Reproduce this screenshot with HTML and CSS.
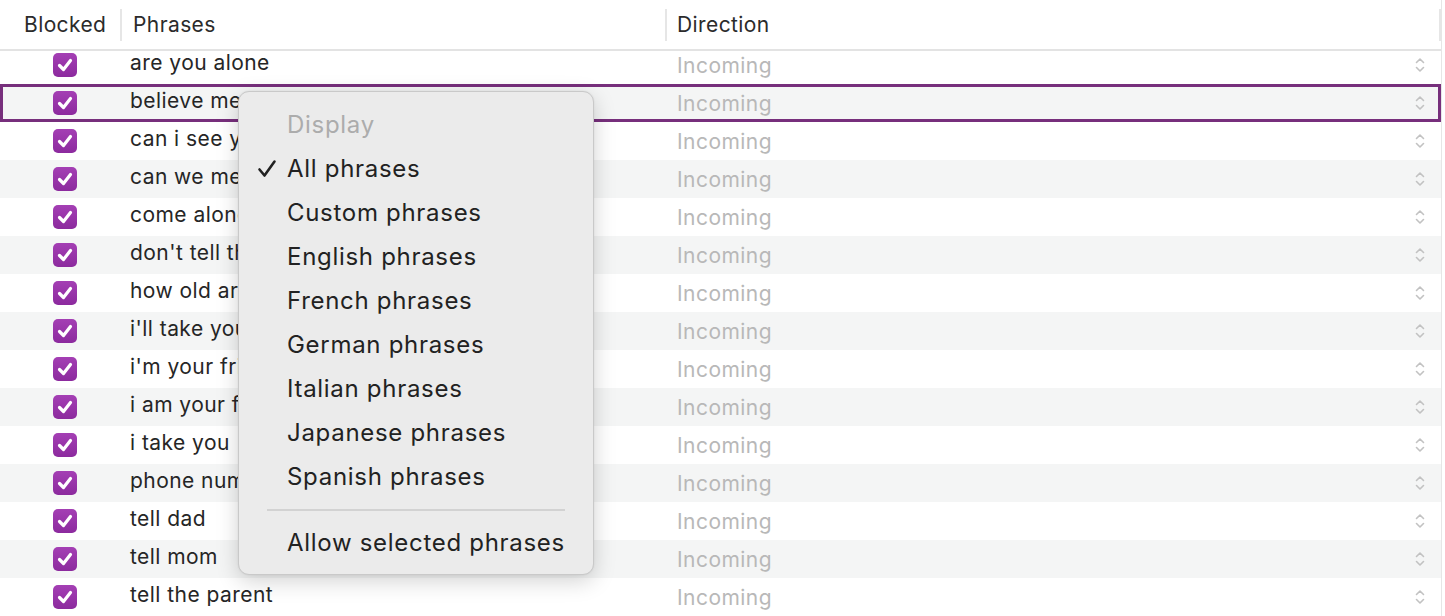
FILE: index.html
```html
<!DOCTYPE html>
<html>
<head>
<meta charset="utf-8">
<link rel="stylesheet" href="styles.css">
</head>
<body>
<div class="table">
  <div class="header">
    <div class="hcell c-blocked">Blocked</div>
    <div class="hcell c-phrase">Phrases</div>
    <div class="hcell c-dir">Direction</div>
  </div>
  <div class="rows" id="rows"></div>
</div>

<div class="menu">
  <div class="mi disabled">Display</div>
  <div class="mi"><span class="check"><svg viewBox="0 0 20 20" width="20" height="20"><path d="M2.5 10.5 L7.5 16.5 L17.5 2.5" fill="none" stroke="#222" stroke-width="2.6" stroke-linecap="round" stroke-linejoin="round"/></svg></span>All phrases</div>
  <div class="mi">Custom phrases</div>
  <div class="mi">English phrases</div>
  <div class="mi">French phrases</div>
  <div class="mi">German phrases</div>
  <div class="mi">Italian phrases</div>
  <div class="mi">Japanese phrases</div>
  <div class="mi">Spanish phrases</div>
  <div class="sep"></div>
  <div class="mi">Allow selected phrases</div>
</div>
<script src="app.js"></script>
</body>
</html>
```

FILE: app.js
```js
const phrases = ["are you alone","believe me","can i see you","can we meet","come alone","don't tell them","how old are you","i'll take you","i'm your friend","i am your friend","i take you","phone number","tell dad","tell mom","tell the parent"];
const rows = document.getElementById('rows');
phrases.forEach((p, i) => {
  const r = document.createElement('div');
  r.className = 'row' + (i % 2 === 1 ? ' alt' : '') + (i === 1 ? ' selected' : '');
  r.innerHTML =
    '<div class="cell c-blocked"><span class="cb"><svg viewBox="0 0 24 24" width="24" height="24"><path d="M6.5 12.5 L10.5 16.5 L17.5 7.5" fill="none" stroke="#fff" stroke-width="3.2" stroke-linecap="round" stroke-linejoin="round"/></svg></span></div>' +
    '<div class="cell c-phrase">' + p + '</div>' +
    '<div class="cell c-dir">Incoming</div>' +
    '<div class="stepper"><svg viewBox="0 0 10 18" width="10" height="18"><path d="M1.5 6.5 L5 3 L8.5 6.5 M1.5 11.5 L5 15 L8.5 11.5" fill="none" stroke="#c2c2c2" stroke-width="1.6" stroke-linecap="round" stroke-linejoin="round"/></svg></div>';
  rows.appendChild(r);
});
```

FILE: styles.css
```css
html, body {
  margin: 0;
  padding: 0;
  background: #fff;
  overflow: hidden;
}
body {
  font-family: "Inter", "Liberation Sans", sans-serif;
  color: #262626;
  width: 1445px;
  height: 616px;
}
.table {
  width: 1441px;
  border-right: 1px solid #e6e6e6;
  height: 616px;
  overflow: hidden;
}
.header {
  position: relative;
  z-index: 2;
  height: 49px;
  background: #fff;
  border-bottom: 2px solid #e3e3e3;
  display: flex;
  align-items: center;
  font-size: 21px;
  letter-spacing: 0.4px;
  color: #2b2b2b;
}
.hcell {
  height: 32px;
  line-height: 32px;
  box-sizing: border-box;
}
.header .c-blocked {
  width: 122px;
  padding-left: 24px;
  border-right: 2px solid #e6e6e6;
}
.header .c-phrase {
  width: 545px;
  padding-left: 11px;
  border-right: 2px solid #e6e6e6;
}
.header .c-dir {
  flex: 1;
  padding-left: 10px;
  border-right: 2px solid #e6e6e6;
}
.rows {
  margin-top: -5px;
}
.row {
  height: 38px;
  display: flex;
  align-items: center;
  font-size: 21px;
  letter-spacing: 0.45px;
  box-sizing: border-box;
}
.row.alt {
  background: #f4f5f5;
}
.row.selected {
  border: 3px solid #772f7c;
}
.row.selected .c-blocked { margin-left: -3px; }
.row .c-blocked {
  width: 122px;
  display: flex;
  justify-content: flex-start;
  padding-left: 53px;
  box-sizing: border-box;
}
.cb {
  width: 24px;
  height: 24px;
  border-radius: 5px;
  background: linear-gradient(#a43fb4, #8c2a9e);
  display: block;
}
.cb svg { display: block; }
.row .c-phrase {
  width: 546px;
  padding-left: 8px;
  box-sizing: border-box;
  margin-top: -5px;
}
.row .c-dir {
  flex: 1;
  padding-left: 9px;
  color: #b8b8b8;
  margin-top: 1px;
}
.stepper {
  width: 10px;
  margin-right: 16px;
  display: flex;
}
.stepper svg { display: block; }
.row.selected .stepper { margin-right: 13px; }

.menu {
  position: absolute;
  left: 238px;
  top: 91px;
  width: 356px;
  height: 484px;
  box-sizing: border-box;
  background: #ebebeb;
  border: 1px solid #c9c9c9;
  border-radius: 11px;
  box-shadow: 0 6px 22px rgba(0, 0, 0, 0.18), 0 0 2px rgba(0,0,0,0.08);
  padding-top: 11px;
  font-size: 24px;
  letter-spacing: 0.7px;
  color: #222;
  z-index: 5;
}
.mi {
  height: 44px;
  line-height: 44px;
  padding-left: 48px;
  position: relative;
  white-space: nowrap;
}
.mi.disabled {
  color: #acacac;
}
.check {
  position: absolute;
  left: 18px;
  top: 12px;
  width: 20px;
  height: 20px;
}
.check svg { display: block; }
.sep {
  height: 22px;
  margin: 0 28px;
  position: relative;
}
.sep::after {
  content: "";
  position: absolute;
  left: 0;
  right: 0;
  top: 10px;
  height: 2px;
  background: #d2d2d2;
}
```
